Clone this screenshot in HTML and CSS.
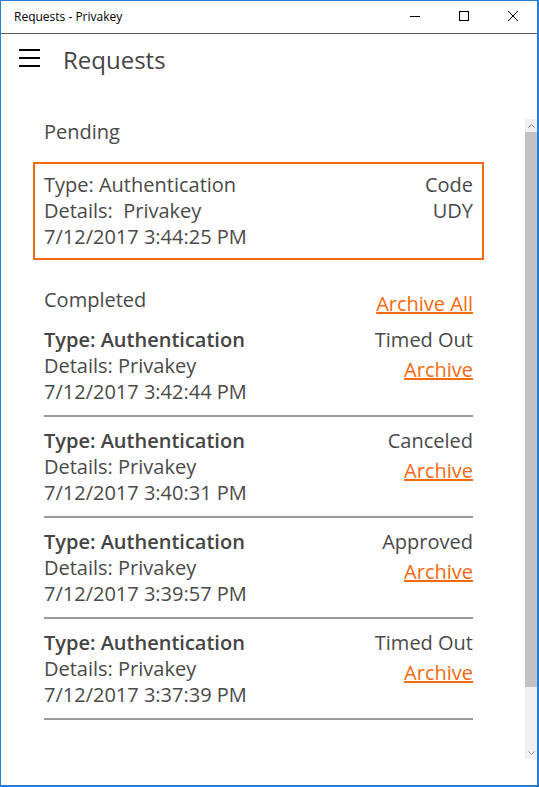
FILE: index.html
```html
<!DOCTYPE html>
<html lang="en">
<head>
    <meta charset="UTF-8">
    <title>Requests - Privakey</title>
    <link rel="stylesheet" href="styles.css">
</head>
<body>
    <div class="window">
        <!-- Barra del titolo -->
        <div class="titlebar">
            <span class="title">Requests - Privakey</span>
            <div class="controls">
                <span class="ctrl">
                    <svg width="10" height="10" viewBox="0 0 10 10"><path d="M0 5.5H10" stroke="#000" stroke-width="1"/></svg>
                </span>
                <span class="ctrl">
                    <svg width="10" height="10" viewBox="0 0 10 10"><rect x="0.5" y="0.5" width="9" height="9" fill="none" stroke="#000" stroke-width="1"/></svg>
                </span>
                <span class="ctrl">
                    <svg width="10" height="10" viewBox="0 0 10 10"><path d="M0 0L10 10M10 0L0 10" stroke="#000" stroke-width="1"/></svg>
                </span>
            </div>
        </div>

        <div class="app">
            <div class="topbar">
                <svg class="hamburger" width="21" height="19" viewBox="0 0 21 19">
                    <rect x="0" y="0" width="21" height="2" fill="#000"/>
                    <rect x="0" y="8" width="21" height="2" fill="#000"/>
                    <rect x="0" y="16" width="21" height="2" fill="#000"/>
                </svg>
                <h1 class="page-title">Requests</h1>
            </div>

            <div class="body">
                <div class="content">
                    <div class="section-title">Pending</div>
                    <div class="pending">
                        <div class="left">
                            <div>Type: Authentication</div>
                            <div>Details:&nbsp; Privakey</div>
                            <div>7/12/2017 3:44:25 PM</div>
                        </div>
                        <div class="right">
                            <div>Code</div>
                            <div>UDY</div>
                        </div>
                    </div>

                    <div class="completed-head">
                        <div class="section-title">Completed</div>
                        <a href="#" class="link archive-all">Archive All</a>
                    </div>

                    <div class="item">
                        <div class="left">
                            <div class="type">Type: Authentication</div>
                            <div>Details: Privakey</div>
                            <div>7/12/2017 3:42:44 PM</div>
                        </div>
                        <div class="right">
                            <div>Timed Out</div>
                            <a href="#" class="link archive">Archive</a>
                        </div>
                    </div>
                    <div class="item">
                        <div class="left">
                            <div class="type">Type: Authentication</div>
                            <div>Details: Privakey</div>
                            <div>7/12/2017 3:40:31 PM</div>
                        </div>
                        <div class="right">
                            <div>Canceled</div>
                            <a href="#" class="link archive">Archive</a>
                        </div>
                    </div>
                    <div class="item">
                        <div class="left">
                            <div class="type">Type: Authentication</div>
                            <div>Details: Privakey</div>
                            <div>7/12/2017 3:39:57 PM</div>
                        </div>
                        <div class="right">
                            <div>Approved</div>
                            <a href="#" class="link archive">Archive</a>
                        </div>
                    </div>
                    <div class="item">
                        <div class="left">
                            <div class="type">Type: Authentication</div>
                            <div>Details: Privakey</div>
                            <div>7/12/2017 3:37:39 PM</div>
                        </div>
                        <div class="right">
                            <div>Timed Out</div>
                            <a href="#" class="link archive">Archive</a>
                        </div>
                    </div>
                </div>

                <!-- Barra di scorrimento -->
                <div class="scrollbar">
                    <div class="arrow">
                        <svg width="7" height="4" viewBox="0 0 7 4"><path d="M0.5 3.5L3.5 0.5L6.5 3.5" fill="none" stroke="#777" stroke-width="1"/></svg>
                    </div>
                    <div class="thumb"></div>
                    <div class="track"></div>
                    <div class="arrow">
                        <svg width="7" height="4" viewBox="0 0 7 4"><path d="M0.5 0.5L3.5 3.5L6.5 0.5" fill="none" stroke="#999" stroke-width="1"/></svg>
                    </div>
                </div>
            </div>
        </div>
    </div>
</body>
</html>
```

FILE: styles.css
```css
html, body {
    margin: 0;
    padding: 0;
    background-color: #fff;
}
body {
    font-family: "Open Sans", "Noto Sans", sans-serif;
    color: #4a4a4a;
}
.window {
    width: 539px;
    height: 787px;
    box-sizing: border-box;
    border: 1px solid #2b7cd3; /* Bordo blu della finestra */
    border-right-width: 2px;
    border-bottom-width: 2px;
    display: flex;
    flex-direction: column;
    background-color: #fff;
}

/* Barra del titolo */
.titlebar {
    height: 32px;
    border-bottom: 1px solid #5a5a5a;
    display: flex;
    align-items: center;
    justify-content: space-between;
}
.titlebar .title {
    font-size: 12px;
    color: #000;
    padding-left: 13px;
    padding-bottom: 2px;
}
.controls {
    display: flex;
    height: 100%;
}
.ctrl {
    width: 49px;
    display: flex;
    align-items: center;
    justify-content: center;
    padding-bottom: 3px;
}

/* Intestazione pagina */
.app {
    flex: 1;
    display: flex;
    flex-direction: column;
}
.topbar {
    height: 65px;
    display: flex;
    align-items: flex-start;
}
.hamburger {
    margin: 15px 0 0 18px;
}
.page-title {
    margin: 10px 0 0 23px;
    font-size: 24px;
    font-weight: normal;
    line-height: 32px;
    color: #444;
}

/* Contenuto */
.body {
    flex: 1;
    display: flex;
}
.content {
    width: 429px;
    padding: 20px 0 0 43px;
    font-size: 20px;
    line-height: 26px;
}
.section-title {
    font-size: 20px;
}
.pending {
    margin: 17px -11px 0;
    border: 2px solid #f7690f; /* Bordo arancione */
    padding: 8px 9px;
    display: flex;
    justify-content: space-between;
}
.right {
    text-align: right;
    display: flex;
    flex-direction: column;
    align-items: flex-end;
}
.completed-head {
    margin-top: 27px;
    margin-bottom: 10px;
    display: flex;
    justify-content: space-between;
    align-items: flex-start;
}
.link {
    color: #f7690f;
    text-decoration: underline;
}
.archive-all {
    margin-top: 4px;
}
.item {
    display: flex;
    justify-content: space-between;
    padding-bottom: 10px;
    border-bottom: 2px solid #9a9a9a;
}
.item + .item {
    padding-top: 11px;
}
.item .type {
    font-weight: 600;
    color: #444;
}
.archive {
    margin-top: 4px;
}

/* Barra di scorrimento */
.scrollbar {
    margin: 20px 0 0 auto;
    width: 12px;
    height: 640px;
    display: flex;
    flex-direction: column;
    background-color: #f0f0f0;
}
.arrow {
    height: 13px;
    display: flex;
    align-items: center;
    justify-content: center;
}
.thumb {
    height: 555px;
    background-color: #c2c2c2;
}
.track {
    flex: 1;
}
```
